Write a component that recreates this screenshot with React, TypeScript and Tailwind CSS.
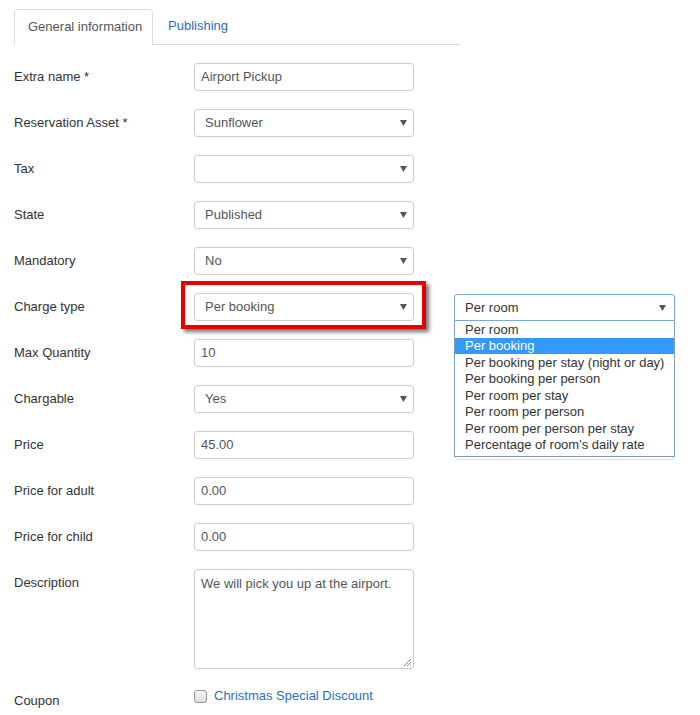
import React from "react";

function Arrow() {
  return (
    <svg width="7" height="6" viewBox="0 0 7 6" className="shrink-0">
      <path d="M0 0 H7 L3.5 6 Z" fill="#555" />
    </svg>
  );
}

function TextBox({ value }: { value: string }) {
  return (
    <div className="flex h-[28px] w-[220px] items-center rounded-[3px] border border-[#ccc] bg-white px-[6px] text-[13px] text-[#555]">
      {value}
    </div>
  );
}

function SelectBox({ value }: { value: string }) {
  return (
    <div className="flex h-[28px] w-[220px] items-center justify-between rounded-[3px] border border-[#ccc] bg-white pl-[10px] pr-[6px] text-[13px] text-[#555]">
      <span>{value}</span>
      <Arrow />
    </div>
  );
}

function Row({
  label,
  children,
}: {
  label: string;
  children: React.ReactNode;
}) {
  return (
    <div className="mb-[18px] flex items-center">
      <div className="w-[180px] text-[13px] text-[#333]">{label}</div>
      {children}
    </div>
  );
}

const options = [
  "Per room",
  "Per booking",
  "Per booking per stay (night or day)",
  "Per booking per person",
  "Per room per stay",
  "Per room per person",
  "Per room per person per stay",
  "Percentage of room's daily rate",
];

export default function App() {
  return (
    <div
      className="relative h-[715px] w-[700px] overflow-hidden bg-white pl-[14px] pt-[9px]"
      style={{ fontFamily: '"Liberation Sans", Arial, sans-serif' }}
    >
      {/* tabs */}
      <div className="flex w-[447px] border-b border-[#ddd] text-[13px]">
        <div className="-mb-px flex h-[36px] w-[139px] items-center rounded-t-[4px] border border-b-0 border-[#ddd] bg-white pb-[2px] pl-[13px] text-[#555]">
          General information
        </div>
        <div className="flex h-[35px] items-center pb-[2px] pl-[15px] text-[#2f6cb5]">
          Publishing
        </div>
      </div>

      <div className="mt-[18px]">
        <Row label="Extra name *">
          <TextBox value="Airport Pickup" />
        </Row>
        <Row label="Reservation Asset *">
          <SelectBox value="Sunflower" />
        </Row>
        <Row label="Tax">
          <SelectBox value="" />
        </Row>
        <Row label="State">
          <SelectBox value="Published" />
        </Row>
        <Row label="Mandatory">
          <SelectBox value="No" />
        </Row>
        <Row label="Charge type">
          <SelectBox value="Per booking" />
        </Row>
        <Row label="Max Quantity">
          <TextBox value="10" />
        </Row>
        <Row label="Chargable">
          <SelectBox value="Yes" />
        </Row>
        <Row label="Price">
          <TextBox value="45.00" />
        </Row>
        <Row label="Price for adult">
          <TextBox value="0.00" />
        </Row>
        <Row label="Price for child">
          <TextBox value="0.00" />
        </Row>

        <div className="mb-[14px] flex items-start">
          <div className="w-[180px] pt-[4px] text-[13px] text-[#333]">
            Description
          </div>
          <div className="relative h-[100px] w-[220px] rounded-[3px] border border-[#ccc] bg-white px-[6px] pt-[4px] text-[13px] text-[#555]">
            We will pick you up at the airport.
            <svg
              width="8"
              height="8"
              viewBox="0 0 8 8"
              className="absolute bottom-[2px] right-[2px]"
            >
              <path d="M8 1 L1 8 M8 4 L4 8 M8 7 L7 8" stroke="#888" strokeWidth="1" />
            </svg>
          </div>
        </div>

        <div className="flex items-start">
          <div className="w-[180px] pt-[8px] text-[13px] text-[#333]">
            Coupon
          </div>
          <div className="flex items-center pt-[4px]">
            <div className="h-[13px] w-[13px] rounded-[3px] border border-[#999] bg-gradient-to-b from-[#f4f4f4] to-[#dedede]" />
            <span className="-mt-[1px] ml-[7px] text-[13px] text-[#2f6cb5]">
              Christmas Special Discount
            </span>
          </div>
        </div>
      </div>

      {/* red highlight around charge type */}
      <div className="pointer-events-none absolute left-[181px] top-[281px] h-[48px] w-[245px] border-[4px] border-[#e60000] shadow-[3px_3px_4px_rgba(0,0,0,0.55)]" />

      {/* open dropdown */}
      <div className="absolute left-[454px] top-[294px] w-[221px] text-[13px]">
        <div className="flex h-[27px] items-center justify-between rounded-t-[3px] border border-[#7aa7dc] bg-white pl-[10px] pr-[8px] text-[#333]">
          <span>Per room</span>
          <Arrow />
        </div>
        <div className="border border-t-0 border-[#7f9db9] bg-white pb-[3px]">
          {options.map((o, i) => (
            <div
              key={o}
              className={`flex h-[16.5px] items-center pl-[10px] ${
                i === 1 ? "bg-[#3399ff] text-white" : "text-[#333]"
              }`}
            >
              {o}
            </div>
          ))}
        </div>
        <div className="mx-px h-[3px] rounded-b-[3px] border border-t-0 border-[#ddd]" />
      </div>
    </div>
  );
}
